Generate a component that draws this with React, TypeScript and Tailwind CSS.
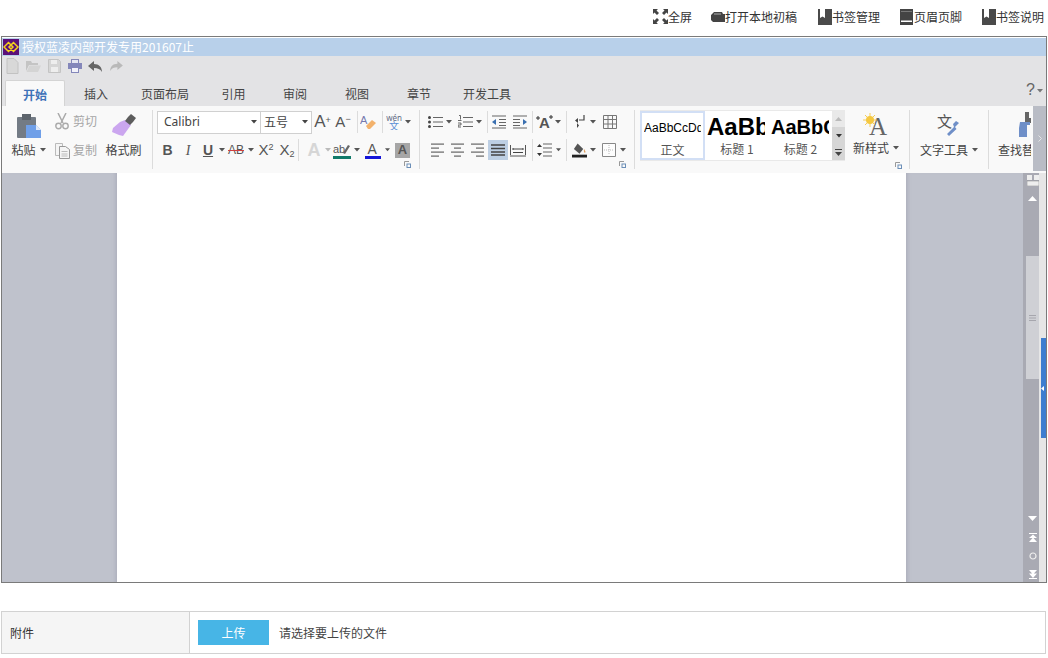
import React from "react";

const font = "font-['Noto_Sans_CJK_SC','Liberation_Sans',sans-serif]";

function Cell({ w, children, className = "" }: { w: string; children?: React.ReactNode; className?: string }) {
  return <div className={`flex shrink-0 items-center justify-center ${w} ${className}`}>{children}</div>;
}
function Caret({ c = "#555" }: { c?: string }) {
  return (
    <svg width="6" height="4" viewBox="0 0 6 4"><path d="M0 0h6L3 3.5z" fill={c} /></svg>
  );
}
function Sep() {
  return <div className="h-[22px] w-px shrink-0 bg-[#dcdcdc]" />;
}
function Lines({ xs, w = 16 }: { xs: [number, number][]; w?: number }) {
  return (
    <svg width={w} height="14" viewBox={`0 0 ${w} 14`}>
      {xs.map(([a, b], i) => (
        <rect key={i} x={a} y={1 + i * (12 / (xs.length - 1 || 1)) - 0.5} width={b - a} height="1.2" fill="#666" />
      ))}
    </svg>
  );
}
function Launcher() {
  return (
    <svg width="7" height="7" viewBox="0 0 7 7">
      <path d="M0.5 5V0.5H5" stroke="#999" fill="none" />
      <rect x="3" y="3" width="3.5" height="3.5" fill="none" stroke="#6c8fb8" />
    </svg>
  );
}
function BookMark() {
  return (
    <svg width="14" height="16" viewBox="0 0 14 16">
      <rect width="14" height="16" fill="#4a4a4a" />
      <path d="M2 0h5v9L4.500 7.500 2 9z" fill="#fff" />
    </svg>
  );
}

function TopLink({ icon, text, className = "" }: { icon: React.ReactNode; text: string; className?: string }) {
  return (
    <div className={`flex items-center ${className}`}>
      {icon}
      <span className="text-[12px] leading-[16px] text-[#333]">{text}</span>
    </div>
  );
}

function Tab({ w, text, active }: { w: string; text: string; active?: boolean }) {
  return (
    <div
      className={`flex h-[26px] shrink-0 items-center justify-center pt-[2px] text-[12px] ${w} ${
        active
          ? "rounded-t-[2px] border border-b-0 border-[#d4d4d4] bg-[#f9f9f9] font-bold text-[#3f73b8]"
          : "text-[#444]"
      }`}
    >
      {text}
    </div>
  );
}

function QatIcons() {
  return (
    <div className="flex h-[24px] items-center pb-[4px]">
      <Cell w="w-[21px]">
        <svg width="13" height="16" viewBox="0 0 13 16"><path d="M1 .5h7l4 4v11H1z" fill="#d8d8d8" stroke="#c2c2c2" /></svg>
      </Cell>
      <Cell w="w-[21px]">
        <svg width="15" height="12" viewBox="0 0 15 12"><path d="M0 1h5l1 2h6v2H3L0 11z" fill="#c4c4c4" /><path d="M3.5 5.5H15L12 12H0.5z" fill="#d4d4d4" /></svg>
      </Cell>
      <Cell w="w-[21px]">
        <svg width="13" height="14" viewBox="0 0 13 14"><path d="M.5.5h10l2 2v11H.5z" fill="#d6d6d6" stroke="#c4c4c4" /><rect x="3" y="1" width="6" height="4" fill="#eee" /><rect x="3" y="8" width="7" height="5" fill="#eee" /></svg>
      </Cell>
      <Cell w="w-[19px]">
        <svg width="14" height="14" viewBox="0 0 14 14"><rect x="3.500" y=".5" width="7" height="4" fill="#e6e7f2" stroke="#8487ba" /><rect x="0" y="4" width="14" height="6" fill="#8487ba" /><rect x="3.500" y="8.500" width="7" height="5" fill="#f2f2fa" stroke="#8487ba" /></svg>
      </Cell>
      <Cell w="w-[22px]">
        <svg width="14" height="11" viewBox="0 0 14 11"><path d="M6 0v3c5 0 8 3 8 8-2-3-4-4-8-4v3L0 5z" fill="#666" /></svg>
      </Cell>
      <Cell w="w-[20px]">
        <svg width="13" height="10" viewBox="0 0 14 11"><path d="M8 0v3C3 3 0 6 0 11c2-3 4-4 8-4v3l6-5z" fill="#b9b9b9" /></svg>
      </Cell>
    </div>
  );
}

function Clipboard() {
  return (
    <div className="flex h-[65px] shrink-0 items-stretch pl-[5px]">
      <div className="flex w-[43px] flex-col items-center pt-[7px]">
        <svg width="26" height="26" viewBox="0 0 26 26">
          <rect x="1" y="4" width="19" height="21" rx="1" fill="#737b85" />
          <rect x="6" y="1" width="9" height="6" fill="#5d646c" />
          <path d="M10 12h10l5 5v8H10z" fill="#6f9fe8" />
          <path d="M20 12l5 5h-5z" fill="#dfe9fa" />
        </svg>
        <div className="mt-[2px] flex items-center gap-[4px] text-[12px] leading-[18px] text-[#444]">粘贴<Caret /></div>
      </div>
      <div className="ml-[5px] flex w-[50px] flex-col pt-[5px] text-[12px] text-[#a6a6a6]">
        <div className="flex h-[20px] items-center gap-[4px]">
          <svg width="14" height="17" viewBox="0 0 14 17"><path d="M3 0l5 10M11 0L6 10" stroke="#aaa" strokeWidth="1.5" /><circle cx="3.5" cy="13" r="2.7" fill="none" stroke="#aaa" strokeWidth="1.4" /><circle cx="10.5" cy="13" r="2.7" fill="none" stroke="#aaa" strokeWidth="1.4" /></svg>
          剪切
        </div>
        <div className="mt-[9px] flex h-[20px] items-center gap-[3px]">
          <svg width="15" height="17" viewBox="0 0 15 17"><path d="M.5 1.5h7v12h-7z" fill="#f5f5f5" stroke="#bbb" /><path d="M4.5 4.5h6l4 3v9h-10z" fill="#f5f5f5" stroke="#999" /><path d="M6.5 9.5h6M6.5 12h6M6.5 14h6" stroke="#bbb" /></svg>
          复制
        </div>
      </div>
      <div className="flex w-[37px] flex-col items-center pt-[7px]">
        <svg width="26" height="26" viewBox="0 0 26 26">
          <path d="M14 7l6 5-8 11-4-1-7-3 1-4 7-6z" fill="#cba6ef" />
          <path d="M14 8l3-4 3-3 5 4-3 4-3 3z" fill="#5d5d5d" />
        </svg>
        <div className="mt-[2px] text-[12px] leading-[18px] text-[#444]">格式刷</div>
      </div>
      <div className="ml-[10px] mt-[4px] h-[59px] w-px bg-[#dcdcdc]" />
    </div>
  );
}

function FontGroup() {
  return (
    <div className="relative ml-[4px] flex w-[262px] shrink-0 flex-col pt-[4px]">
      <div className="flex h-[24px] items-center">
        <div className="flex h-[23px] w-[104px] items-center justify-between border border-[#d0d0d0] bg-white pl-[6px] pr-[3px] font-['Noto_Sans','Liberation_Sans',sans-serif] text-[12px] text-[#444]">Calibri<Caret c="#444" /></div>
        <div className="-ml-px flex h-[23px] w-[52px] items-center justify-between border border-[#d0d0d0] bg-white pl-[3px] pr-[3px] text-[12px] text-[#444]">五号<Caret c="#444" /></div>
        <Cell w="w-[21px]" className="text-[17px] text-[#555]"><span className="font-['Liberation_Sans']">A<sup className="text-[9px]">+</sup></span></Cell>
        <Cell w="w-[20px]" className="text-[15px] text-[#555]"><span className="font-['Liberation_Sans']">A<sup className="text-[9px]">−</sup></span></Cell>
        <div className="ml-[4px]"><Sep /></div>
        <Cell w="w-[21px]">
          <svg width="17" height="17" viewBox="0 0 17 17"><text x="0" y="10" fontSize="11" fill="#7679ae" fontFamily="Liberation Sans">A</text><path d="M6 12l6-6 4 3-6 6H8z" fill="#f3b26c" /></svg>
        </Cell>
        <div className="ml-[3px]"><Sep /></div>
        <Cell w="w-[22px]">
          <svg width="16" height="16" viewBox="0 0 16 16">
            <text x="8" y="6.500" textAnchor="middle" fontSize="8" fill="#5f6b85" fontFamily="Noto Sans">wén</text>
            <text x="8" y="15.500" textAnchor="middle" fontSize="10" fill="#5a8fd6" fontFamily="Noto Sans CJK SC">文</text>
          </svg>
        </Cell>
        <Caret />
      </div>
      <div className="mt-[4px] flex h-[24px] items-center text-[#555]">
        <Cell w="w-[21px]" className="font-['Liberation_Sans'] text-[14px] font-bold">B</Cell>
        <Cell w="w-[20px]" className="font-['Liberation_Serif'] text-[14px] italic">I</Cell>
        <Cell w="w-[20px]" className="font-['Liberation_Sans'] text-[14px] font-bold underline">U</Cell>
        <Cell w="w-[7px]"><Caret /></Cell>
        <Cell w="w-[22px]" className="font-['Liberation_Sans'] text-[12px] line-through decoration-[#d04040]">AB</Cell>
        <Cell w="w-[8px]"><Caret /></Cell>
        <Cell w="w-[22px]" className="font-['Liberation_Sans'] text-[15px]"><span>X<sup className="text-[9px]">2</sup></span></Cell>
        <Cell w="w-[20px]" className="font-['Liberation_Sans'] text-[15px]"><span>X<sub className="text-[9px]">2</sub></span></Cell>
        <div className="ml-[1px]"><Sep /></div>
        <Cell w="w-[20px]" className="ml-[5px] font-['Liberation_Sans'] text-[18px] font-bold text-[#d6d6d6]">A</Cell>
        <Cell w="w-[7px]"><Caret c="#bbb" /></Cell>
        <Cell w="w-[22px]">
          <svg width="18" height="17" viewBox="0 0 18 17"><text x="0" y="11" fontSize="11" fill="#555" fontFamily="Liberation Sans">ab</text><path d="M10 11l5-8 2 1-5 8z" fill="#666" /><rect y="14" width="18" height="3" fill="#117a6a" /></svg>
        </Cell>
        <Cell w="w-[7px]"><Caret /></Cell>
        <Cell w="w-[25px]">
          <svg width="16" height="17" viewBox="0 0 16 17"><text x="2.5" y="12" fontSize="14" fill="#555" fontFamily="Liberation Sans">A</text><rect y="14" width="16" height="3" fill="#1515d8" /></svg>
        </Cell>
        <Cell w="w-[5px]"><Caret /></Cell>
        <Cell w="w-[25px]">
          <div className="flex h-[15px] w-[15px] items-center justify-center bg-[#a6a6a6] font-['Liberation_Sans'] text-[13px] font-bold text-[#555]">A</div>
        </Cell>
      </div>
      <div className="absolute bottom-[3px] right-[8px] flex"><Launcher /></div>
    </div>
  );
}

function ParaGroup() {
  return (
    <div className="relative flex w-[209px] shrink-0 flex-col pt-[4px]">
      <div className="flex h-[24px] items-center pl-[3px]">
        <Cell w="w-[15px]"><svg width="15" height="14" viewBox="0 0 15 14"><path d="M5 2.5h10M5 7h10M5 11.5h10" stroke="#666" strokeWidth="1.2" /><circle cx="1.5" cy="2.5" r="1.5" fill="#444" /><circle cx="1.5" cy="7" r="1.5" fill="#444" /><circle cx="1.5" cy="11.5" r="1.5" fill="#444" /></svg></Cell>
        <Cell w="w-[12px]"><Caret /></Cell>
        <Cell w="w-[15px]" className="ml-[3px]"><svg width="15" height="14" viewBox="0 0 15 14"><path d="M5 2.5h10M5 7h10M5 11.5h10" stroke="#666" strokeWidth="1.2" /><path d="M1 .5h1.5v4M0 5.5h3.5M0 8h3v2H0v2h3" stroke="#444" fill="none" strokeWidth=".8" /></svg></Cell>
        <Cell w="w-[12px]"><Caret /></Cell>
        <div className="ml-[2px]"><Sep /></div>
        <Cell w="w-[22px]"><svg width="14" height="14" viewBox="0 0 14 14"><path d="M0 1h14M7 4.500h7M7 7.500h7M7 10.500h7M0 13h14" stroke="#666" strokeWidth="1.1" /><path d="M0 7l4-3v6z" fill="#3a6fb0" /></svg></Cell>
        <Cell w="w-[19px]"><svg width="14" height="14" viewBox="0 0 14 14"><path d="M0 1h14M0 4.500h7M0 7.500h7M0 10.500h7M0 13h14" stroke="#666" strokeWidth="1.1" /><path d="M14 7l-4-3v6z" fill="#3a6fb0" /></svg></Cell>
        <div className="ml-[3px]"><Sep /></div>
        <Cell w="w-[22px]"><svg width="17" height="16" viewBox="0 0 17 16"><text x="3" y="14" fontSize="15" fill="#555" fontWeight="bold" fontFamily="Liberation Sans">A</text><path d="M0 4h4M2 2v4M13 3h4M15 1v4" stroke="#333" /></svg></Cell>
        <Cell w="w-[6px]"><Caret /></Cell>
        <Cell w="w-[11px]"><Sep /></Cell>
        <Cell w="w-[15px]"><svg width="11" height="14" viewBox="0 0 11 14"><path d="M10 0v5H5" stroke="#444" fill="none" strokeWidth="1.2" /><path d="M4 3L1 5.500 4 8zM0 10h3M3 8v5l2-2.500z" fill="#444" /></svg></Cell>
        <Cell w="w-[12px]"><Caret /></Cell>
        <Cell w="w-[21px]"><svg width="14" height="14" viewBox="0 0 14 14"><path d="M.5.5h13v13H.5zM.5 4.500h13M.5 9h13M5 .5v13M9.500.5v13" stroke="#777" fill="none" /></svg></Cell>
      </div>
      <div className="mt-[4px] flex h-[24px] items-center">
        <Cell w="w-[24px]"><Lines w={13} xs={[[0, 13], [0, 8], [0, 13], [0, 8]]} /></Cell>
        <Cell w="w-[17px]"><Lines w={13} xs={[[0, 13], [3, 10], [0, 13], [3, 10]]} /></Cell>
        <Cell w="w-[22px]"><Lines w={13} xs={[[0, 13], [5, 13], [0, 13], [5, 13]]} /></Cell>
        <Cell w="w-[20px]" className="h-[20px] bg-[#bdcfe4]">
          <svg width="14" height="12" viewBox="0 0 14 12"><path d="M0 1h14M0 4.500h14M0 8h14M0 11h14" stroke="#444" strokeWidth="1.3" /></svg>
        </Cell>
        <Cell w="w-[19px]"><svg width="16" height="14" viewBox="0 0 16 14"><path d="M.5 2v10M15.500 2v10M0 13h16" stroke="#555" /><path d="M3 6h10M3 5v2M13 5v2M3 9.500h10" stroke="#444" /></svg></Cell>
        <Cell w="w-[5px]" />
        <Sep />
        <Cell w="w-[23px]"><svg width="15" height="14" viewBox="0 0 15 14"><path d="M6 1h9M6 5h9M6 9h9M6 13h9" stroke="#666" strokeWidth="1.2" /><path d="M0 4l2.500-3L5 4zM0 10l2.500 3L5 10z" fill="#333" /></svg></Cell>
        <Cell w="w-[5px]"><Caret /></Cell>
        <Cell w="w-[11px]"><Sep /></Cell>
        <Cell w="w-[15px]"><svg width="16" height="16" viewBox="0 0 16 16"><path d="M6 1l6 6-4 5-6-5z" fill="#555" /><path d="M13 7c1 2 2 3 1 4-1 .5-2-2-1-4z" fill="#e0a060" /><rect y="13" width="16" height="3" fill="#222" /></svg></Cell>
        <Cell w="w-[12px]"><Caret /></Cell>
        <Cell w="w-[19px]"><svg width="14" height="14" viewBox="0 0 14 14"><path d="M.5.5h13v13H.5z" stroke="#888" fill="#fdfdfd" /><path d="M7 2v10M2 7h10" stroke="#bbb" strokeDasharray="1 1" /></svg></Cell>
        <Cell w="w-[10px]"><Caret /></Cell>
      </div>
      <div className="absolute bottom-[3px] right-[8px] flex"><Launcher /></div>
    </div>
  );
}

function StyleCard({ sample, name, cls, w, selected }: { sample: string; name: string; cls: string; w: string; selected?: boolean }) {
  return (
    <div className={`flex shrink-0 flex-col items-center overflow-hidden bg-white ${w} ${selected ? "border-2 border-[#d2dff5]" : ""}`}>
      <div className="flex h-[29px] w-full items-center px-[2px] pt-[2px]">
        <div className={`w-[58px] overflow-hidden whitespace-nowrap font-['Liberation_Sans'] text-black ${cls}`}>{sample}</div>
      </div>
      <div className="text-[12px] leading-[17px] text-[#555]">{name}</div>
    </div>
  );
}

function StylesGroup() {
  return (
    <div className="flex w-[269px] shrink-0 pt-[4px]">
      <div className="flex h-[51px] w-[205px] shrink-0 bg-[#e9e9e9] py-[1px]">
        <StyleCard w="w-[65px]" selected cls="text-[12px] leading-[16px]" sample="AaBbCcDd" name="正文" />
        <StyleCard w="w-[64px]" cls="text-[24px] leading-[28px] font-bold" sample="AaBbC" name="标题 1" />
        <StyleCard w="w-[63px]" cls="text-[20px] leading-[24px] font-bold" sample="AaBbCc" name="标题 2" />
        <div className="flex w-[13px] flex-col">
          <div className="flex h-[16px] items-center justify-center"><svg width="7" height="4" viewBox="0 0 7 4"><path d="M0 4h7L3.500 0z" fill="#bbb" /></svg></div>
          <div className="flex h-[17px] items-center justify-center bg-[#d6d6d6]"><Caret c="#333" /></div>
          <div className="flex h-[16px] items-center justify-center bg-[#d6d6d6]"><svg width="7" height="7" viewBox="0 0 7 7"><path d="M0 0h7v1H0zM0 3h7L3.500 7z" fill="#444" /></svg></div>
        </div>
      </div>
      <div className="relative flex h-[59px] w-[62px] shrink-0 flex-col items-center">
        <svg className="mt-[2px]" width="26" height="25" viewBox="0 0 26 25">
          <text x="6" y="23" fontSize="25" fill="#666" fontFamily="Liberation Serif">A</text>
          <circle cx="7" cy="8" r="4" fill="#f5c842" />
          <path d="M7 1v14M0 8h14M2 3l10 10M12 3L2 13" stroke="#f5c842" strokeWidth=".9" />
        </svg>
        <div className="mt-[2px] flex items-center gap-[4px] text-[12px] leading-[18px] text-[#444]">新样式<Caret /></div>
        <div className="absolute bottom-[0px] right-[5px] flex"><Launcher /></div>
      </div>
    </div>
  );
}

function Ribbon() {
  return (
    <div className="flex h-[65px] bg-[#f9f9f9]">
      <div className="flex w-[1031px] shrink-0 overflow-hidden">
        <Clipboard />
        <FontGroup />
        <div className="mr-[5px] mt-[4px] h-[59px] w-px shrink-0 bg-[#dcdcdc]" />
        <ParaGroup />
        <div className="mr-[5px] mt-[4px] h-[59px] w-px shrink-0 bg-[#dcdcdc]" />
        <StylesGroup />
        <div className="mt-[4px] h-[59px] w-px shrink-0 bg-[#dcdcdc]" />
        <div className="flex w-[78px] shrink-0 flex-col items-center pt-[6px]">
          <svg width="24" height="26" viewBox="0 0 24 26">
            <text x="0" y="15" fontSize="15" fill="#555" fontFamily="Noto Sans CJK SC">文</text>
            <path d="M22 11l-4 4 1.500 2L12 24l-2-2 7-7-1-3 3-3z" fill="#6f8fc8" />
          </svg>
          <div className="mt-[3px] flex items-center gap-[4px] text-[12px] leading-[18px] text-[#444]">文字工具<Caret /></div>
        </div>
        <div className="mt-[4px] h-[59px] w-px shrink-0 bg-[#dcdcdc]" />
        <div className="flex w-[42px] shrink-0 flex-col overflow-hidden pl-[9px] pt-[6px]">
          <svg className="ml-[19px] shrink-0" width="24" height="26" viewBox="0 0 24 26">
            <path d="M8 0h4v6h8V3h2v8H8z" fill="#666" />
            <path d="M3 10h10v3h-3v12H2V16z" fill="#6f8fc8" />
          </svg>
          <div className="mt-[3px] w-[60px] whitespace-nowrap text-[12px] leading-[18px] text-[#444]">查找替换</div>
        </div>
      </div>
      <div className="flex flex-1 items-center justify-center bg-[#b9bcc5]">
        <svg width="4" height="7" viewBox="0 0 4 7"><path d="M.5.500l3 3-3 3" stroke="#e5e5e5" fill="none" /></svg>
      </div>
    </div>
  );
}

function ScrollBar() {
  return (
    <div className="flex w-[16px] shrink-0 flex-col items-center bg-[#a9aab3] pl-[3px]">
      <svg className="mt-[2px]" width="12" height="11" viewBox="0 0 12 11">
        <rect x="0" y="0" width="5" height="5" fill="#eee" /><rect x="7" y="0" width="5" height="5" fill="#eee" />
        <rect x="0" y="6" width="12" height="5" fill="#eee" stroke="#888" strokeWidth=".5" />
      </svg>
      <svg className="mt-[10px]" width="9" height="5" viewBox="0 0 9 5"><path d="M0 5h9L4.500 0z" fill="#fff" /></svg>
      <div className="mt-[55px] flex h-[123px] w-[13px] items-center justify-center self-end bg-[#cfd0d5]">
        <svg width="7" height="6" viewBox="0 0 7 6"><path d="M0 .5h7M0 3h7M0 5.500h7" stroke="#a6a6ad" /></svg>
      </div>
      <div className="flex-1" />
      <svg width="9" height="5" viewBox="0 0 9 5"><path d="M0 0h9L4.500 5z" fill="#fff" /></svg>
      <svg className="mt-[12px]" width="8" height="9" viewBox="0 0 8 9"><path d="M0 0h8v1H0zM4 1.500L8 5H0zM4 4.500L8 9H0z" fill="#fff" /></svg>
      <svg className="mt-[10px]" width="8" height="8" viewBox="0 0 8 8"><circle cx="4" cy="4" r="3" fill="none" stroke="#eee" strokeWidth="1.200" /></svg>
      <svg className="mb-[3px] mt-[10px]" width="8" height="9" viewBox="0 0 8 9"><path d="M0 0h8L4 4.500zM0 3.500h8L4 8zM0 8h8v1H0z" fill="#fff" /></svg>
    </div>
  );
}

export default function App() {
  return (
    <div className={`h-[658px] w-[1048px] overflow-hidden bg-white ${font}`}>
      <div className="flex h-[36px] items-center justify-end pb-[3px] pr-[4px]">
        <TopLink
          className="mr-[19px]"
          text="全屏"
          icon={
            <svg width="15" height="15" viewBox="0 0 15 15"><path d="M0 0h5L3.500 1.500 6 4 4 6 1.500 3.500 0 5zM15 0v5l-1.500-1.500L11 6 9 4l2.500-2.500L10 0zM0 15v-5l1.500 1.500L4 9l2 2-2.500 2.500L5 15zM15 15h-5l1.500-1.500L9 11l2-2 2.500 2.500L15 10z" fill="#444" /></svg>
          }
        />
        <TopLink
          className="mr-[21px]"
          text="打开本地初稿"
          icon={
            <svg width="14" height="10" viewBox="0 0 14 10"><path d="M0 3l3-3h8l1 2h2v8H2L0 8z" fill="#444" /><path d="M3 2h7" stroke="#ddd" strokeWidth=".7" /></svg>
          }
        />
        <TopLink className="mr-[20px]" text="书签管理" icon={<BookMark />} />
        <TopLink
          className="mr-[20px]"
          text="页眉页脚"
          icon={
            <svg className="mr-[1px]" width="13" height="16" viewBox="0 0 13 16"><rect width="13" height="16" fill="#444" /><rect x="1" y="11.500" width="11" height="1.500" fill="#fff" /><rect x="1" y="2" width="11" height="1" fill="#777" /></svg>
          }
        />
        <TopLink text="书签说明" icon={<BookMark />} />
      </div>

      <div className="mx-[1px] flex h-[547px] w-[1046px] flex-col border border-[#7a7a7a] pt-[1px]">
        <div className="flex h-[18px] shrink-0 items-center bg-[#b8d0ea]">
          <svg className="ml-[1px] shrink-0" width="16" height="16" viewBox="0 0 16 16">
            <rect width="16" height="16" fill="#5a1078" />
            <path d="M5.500 3.500L1 8l4.500 4.500L10 8zM10.500 3.500L6 8l4.500 4.500L15 8z" fill="none" stroke="#f4d31c" strokeWidth="1.500" />
          </svg>
          <span className="ml-[3px] text-[12px] leading-[16px] text-white">授权蓝凌内部开发专用201607止</span>
        </div>
        <div className="h-[24px] shrink-0 bg-[#e3e3e5]"><QatIcons /></div>
        <div className="flex h-[26px] shrink-0 items-end bg-[#e3e3e5] pl-[3px] pr-[3px]">
          <Tab w="w-[60px]" text="开始" active />
          <Tab w="w-[62px]" text="插入" />
          <Tab w="w-[76px]" text="页面布局" />
          <Tab w="w-[61px]" text="引用" />
          <Tab w="w-[62px]" text="审阅" />
          <Tab w="w-[62px]" text="视图" />
          <Tab w="w-[62px]" text="章节" />
          <Tab w="w-[74px]" text="开发工具" />
          <div className="flex h-[26px] flex-1 items-start justify-end gap-[2px] pt-[1px] font-['Liberation_Sans'] text-[16px] leading-[18px] text-[#666]">
            ?<div className="mt-[8px] flex"><Caret c="#777" /></div>
          </div>
        </div>
        <Ribbon />
        <div className="flex min-h-0 flex-1 bg-[#f9f9f9] pt-[2px]">
          <div className="flex min-w-0 flex-1">
            <div className="w-[115px] shrink-0 bg-[#bfc2cc] shadow-[inset_-4px_0_4px_-3px_#a8aab8]" />
            <div className="w-[789px] shrink-0 bg-white" />
            <div className="flex-1 bg-[#bfc2cc] shadow-[inset_4px_0_4px_-3px_#a8aab8]" />
          </div>
          <ScrollBar />
          <div className="flex w-[7px] shrink-0 flex-col bg-[#e6e6e6] pl-[2px]">
            <div className="h-[165px]" />
            <div className="flex h-[100px] items-center bg-[#3d7dd0]">
              <svg width="3" height="5" viewBox="0 0 3 5"><path d="M3 0v5L0 2.500z" fill="#fff" /></svg>
            </div>
          </div>
        </div>
      </div>

      <div className="mx-[1px] mt-[28px] flex h-[43px] w-[1045px] items-stretch border border-[#d2d2d2] text-[12px]">
        <div className="flex w-[188px] shrink-0 items-center border-r border-[#d2d2d2] bg-[#f5f5f5] pl-[8px] text-[#333]">附件</div>
        <div className="flex items-center pl-[8px]">
          <button className="h-[25px] w-[71px] bg-[#47b5e6] text-[12px] text-white">上传</button>
          <span className="ml-[10px] text-[#444]">请选择要上传的文件</span>
        </div>
      </div>
    </div>
  );
}
